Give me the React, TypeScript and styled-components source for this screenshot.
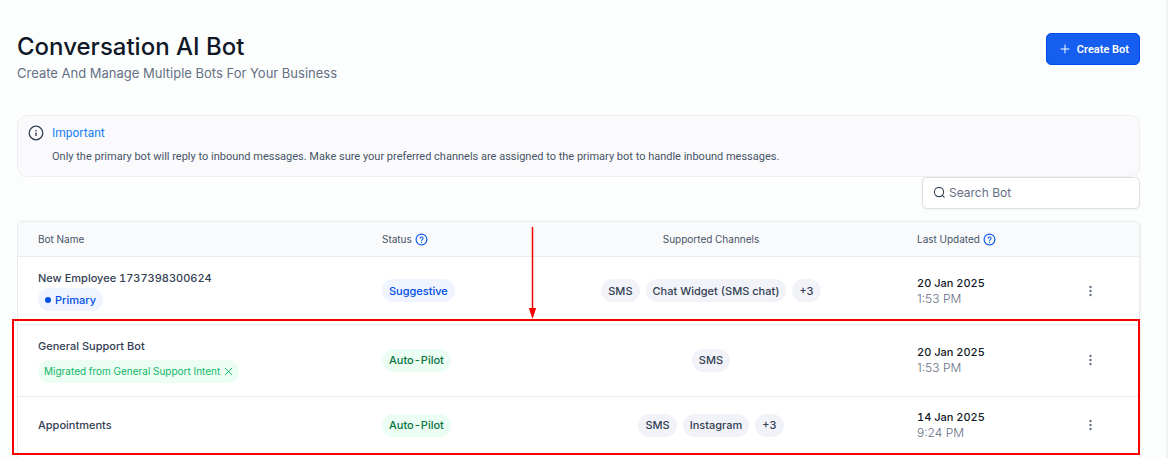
import React from "react";
import styled, { createGlobalStyle, css } from "styled-components";

const GlobalStyle = createGlobalStyle`
  *, *::before, *::after { box-sizing: border-box; }
  body {
    margin: 0;
    background: #f0f1f2;
    font-family: Inter, "Liberation Sans", sans-serif;
    color: #344054;
  }
  button, input { font: inherit; color: inherit; }
`;

const Page = styled.main`
  display: flex;
  flex-direction: column;
  min-height: 100vh;
  margin-right: 2px;
  padding: 31px 26px 0 17px;
  background: #fcfefd;
`;

const Header = styled.header`
  display: flex;
  justify-content: space-between;
  align-items: flex-start;
  height: 84px;
`;

const Title = styled.h1`
  margin: 0;
  font-size: 24px;
  line-height: 32px;
  font-weight: 500;
  color: #101828;
`;

const Subtitle = styled.p`
  margin: 0;
  font-size: 13px;
  line-height: 20px;
  color: #667085;
`;

const CreateButton = styled.button`
  display: flex;
  align-items: center;
  gap: 7px;
  height: 32px;
  margin-top: 2px;
  padding: 0 10px 0 13px;
  border: 1px solid #004eeb;
  border-radius: 5px;
  background: #155eef;
  color: #fff;
  font-family: Roboto, sans-serif;
  font-size: 11px;
  font-weight: 600;
`;

const Notice = styled.section`
  display: flex;
  gap: 8px;
  height: 62px;
  padding: 9px 10px;
  border: 1px solid #efeff3;
  border-radius: 10px;
  background: #fafafc;
`;

const NoticeTitle = styled.h2`
  margin: 0;
  font-family: Roboto, sans-serif;
  font-size: 12px;
  line-height: 17px;
  font-weight: 400;
  color: #2080f0;
`;

const NoticeText = styled.p`
  margin: 6px 0 0;
  font-family: Roboto, sans-serif;
  font-size: 11px;
  line-height: 17px;
  color: #475467;
`;

const Search = styled.label`
  display: flex;
  align-items: center;
  align-self: flex-end;
  gap: 3px;
  width: 218px;
  height: 32px;
  margin-bottom: 12px;
  padding: 0 10px 1px;
  border: 1px solid #dcdfe4;
  border-radius: 5px;
  background: #fff;
  box-shadow: 0 1px 2px rgba(16, 24, 40, 0.05);
`;

const SearchInput = styled.input`
  flex: 1;
  min-width: 0;
  padding: 0;
  border: 0;
  outline: 0;
  background: transparent;
  font-size: 12px;
  line-height: 16px;
  &::placeholder { color: #667085; opacity: 1; }
`;

const TableArea = styled.div`
  position: relative;
  display: flex;
  flex: 1;
`;

const Panel = styled.div`
  flex: 1;
  border: 1px solid #eaecf0;
  border-bottom: 0;
  border-radius: 6px 6px 0 0;
  background: #fff;
  box-shadow: 1px 0 2px rgba(16, 24, 40, 0.06);
  overflow: hidden;
`;

const Table = styled.table`
  width: 100%;
  table-layout: fixed;
  border-collapse: separate;
  border-spacing: 0;
  font-variant-numeric: tabular-nums;
`;

const Col = styled.col<{ $width?: number }>`
  ${(p) => p.$width && css`width: ${p.$width}px;`}
`;

const HeadCell = styled.th<{ $center?: boolean }>`
  height: 35px;
  padding: 0 20px;
  border-bottom: 1px solid #eaecf0;
  background: #f9fafb;
  font-size: 10px;
  line-height: 14px;
  font-weight: 400;
  color: #475467;
  text-align: ${(p) => (p.$center ? "center" : "left")};
`;

const HeadLabel = styled.span`
  display: flex;
  align-items: center;
  gap: 3px;
`;

const Row = styled.tr<{ $height: number }>`
  height: ${(p) => p.$height}px;
`;

const Cell = styled.td`
  padding: 0 20px 1px;
  border-bottom: 1px solid #eaecf0;
  font-size: 12px;
  line-height: 16px;
  vertical-align: middle;

  ${Row}:first-child > & { padding-bottom: 0; }
  ${Row}:last-child > & { border-bottom: 0; }
`;

const Stack = styled.div<{ $gap: number }>`
  display: flex;
  flex-direction: column;
  align-items: flex-start;
  gap: ${(p) => p.$gap}px;
`;

const BotName = styled.span`
  font-size: 11px;
  line-height: 16px;
  font-weight: 500;
`;

const tones = {
  blue: css`background: #eff4ff; color: #004eeb;`,
  green: css`background: #ecfdf3; color: #087443;`,
  mint: css`background: #ecfdf3; color: #12b76a;`,
  gray: css`background: #f2f3f8; color: #344054;`,
};

const Pill = styled.span<{ $tone: keyof typeof tones; $small?: boolean }>`
  display: flex;
  align-items: center;
  gap: 4px;
  width: fit-content;
  height: 23px;
  padding: 0 ${(p) => (p.$small ? 6 : 7)}px;
  border-radius: 12px;
  font-size: ${(p) => (p.$small ? 10 : 11)}px;
  font-weight: ${(p) => (p.$small ? 400 : 500)};
  white-space: nowrap;
  ${(p) => tones[p.$tone]}
`;

const Dot = styled.span`
  width: 6px;
  height: 6px;
  border-radius: 50%;
  background: #004eeb;
`;

const Channels = styled.div`
  display: flex;
  justify-content: center;
  gap: 6px;
`;

const DateText = styled.div`
  font-size: 11px;
  font-weight: 500;
  color: #101828;
`;

const TimeText = styled.div`
  font-size: 12px;
  font-weight: 300;
  font-variant-numeric: normal;
  color: #667085;
`;

const IconButton = styled.button`
  display: flex;
  justify-content: center;
  margin: 0 auto;
  padding: 0;
  border: 0;
  background: transparent;
  color: #667085;
`;

const Highlight = styled.div`
  position: absolute;
  top: 98px;
  left: -5px;
  right: 0;
  height: 136px;
  border: 2px solid #f80000;
  pointer-events: none;
`;

const Arrow = styled.svg`
  position: absolute;
  top: 6px;
  left: 511px;
  pointer-events: none;
`;

const InfoIcon = () => (
  <svg width="16" height="16" viewBox="0 0 16 16" fill="none" stroke="#344054" aria-hidden="true">
    <circle cx="8" cy="8" r="6.8" strokeWidth="1.3" />
    <path d="M8 7.4V11M8 5v1.2" strokeWidth="1.4" />
  </svg>
);

const HelpIcon = () => (
  <svg width="13" height="13" viewBox="0 0 13 13" fill="none" stroke="#155eef" strokeLinecap="round" aria-hidden="true">
    <circle cx="6.5" cy="6.5" r="5.4" strokeWidth="1.2" />
    <path d="M5 5.1a1.6 1.6 0 0 1 3.1.5c0 1-1.6 1.1-1.6 2M6.5 9.3v.1" strokeWidth="1.1" />
  </svg>
);

const SearchIcon = () => (
  <svg width="13" height="13" viewBox="0 0 13 13" fill="none" stroke="#344054" strokeLinecap="round" aria-hidden="true">
    <circle cx="6" cy="6" r="4.6" strokeWidth="1.1" />
    <path d="M9.4 9.4 11.2 11.2" strokeWidth="1.1" />
  </svg>
);

const PlusIcon = () => (
  <svg width="10" height="10" viewBox="0 0 10 10" stroke="#fff" strokeLinecap="round" aria-hidden="true">
    <path d="M5 1v8M1 5h8" />
  </svg>
);

const CloseIcon = () => (
  <svg width="9" height="9" viewBox="0 0 9 9" stroke="currentColor" strokeLinecap="round" aria-hidden="true">
    <path d="M1.2 1.2l6.6 6.6M7.8 1.2L1.2 7.8" />
  </svg>
);

const MoreIcon = () => (
  <svg width="12" height="12" viewBox="0 0 12 12" fill="currentColor" aria-hidden="true">
    <circle cx="6.5" cy="2" r="1.2" />
    <circle cx="6.5" cy="6" r="1.2" />
    <circle cx="6.5" cy="10" r="1.2" />
  </svg>
);

type Bot = {
  name: string;
  primary?: boolean;
  migrated?: string;
  status: "Suggestive" | "Auto-Pilot";
  channels: string[];
  date: string;
  time: string;
  height: number;
};

const bots: Bot[] = [
  { name: "New Employee 1737398300624", primary: true, status: "Suggestive", channels: ["SMS", "Chat Widget (SMS chat)", "+3"], date: "20 Jan 2025", time: "1:53 PM", height: 68 },
  { name: "General Support Bot", migrated: "Migrated from General Support Intent", status: "Auto-Pilot", channels: ["SMS"], date: "20 Jan 2025", time: "1:53 PM", height: 72 },
  { name: "Appointments", status: "Auto-Pilot", channels: ["SMS", "Instagram", "+3"], date: "14 Jan 2025", time: "9:24 PM", height: 57 },
];

export default function App() {
  return (
    <>
      <GlobalStyle />
      <Page>
        <Header>
          <div>
            <Title>Conversation AI Bot</Title>
            <Subtitle>Create And Manage Multiple Bots For Your Business</Subtitle>
          </div>
          <CreateButton type="button">
            <PlusIcon />
            Create Bot
          </CreateButton>
        </Header>
        <Notice>
          <InfoIcon />
          <div>
            <NoticeTitle>Important</NoticeTitle>
            <NoticeText>
              Only the primary bot will reply to inbound messages. Make sure your preferred channels are assigned to the primary bot to handle inbound messages.
            </NoticeText>
          </div>
        </Notice>
        <Search>
          <SearchIcon />
          <SearchInput type="text" placeholder="Search Bot" aria-label="Search Bot" />
        </Search>
        <TableArea>
          <Panel>
            <Table>
              <colgroup>
                <Col />
                <Col $width={163} />
                <Col $width={372} />
                <Col $width={144} />
                <Col $width={98} />
              </colgroup>
              <thead>
                <tr>
                  <HeadCell>Bot Name</HeadCell>
                  <HeadCell><HeadLabel>Status <HelpIcon /></HeadLabel></HeadCell>
                  <HeadCell $center>Supported Channels</HeadCell>
                  <HeadCell><HeadLabel>Last Updated <HelpIcon /></HeadLabel></HeadCell>
                  <HeadCell aria-label="Actions" />
                </tr>
              </thead>
              <tbody>
                {bots.map((bot) => (
                  <Row key={bot.name} $height={bot.height}>
                    <Cell>
                      <Stack $gap={bot.migrated ? 6 : 2}>
                        <BotName>{bot.name}</BotName>
                        {bot.primary && <Pill $tone="blue"><Dot />Primary</Pill>}
                        {bot.migrated && (
                          <Pill $tone="mint" $small>
                            {bot.migrated}
                            <CloseIcon />
                          </Pill>
                        )}
                      </Stack>
                    </Cell>
                    <Cell>
                      <Pill $tone={bot.status === "Suggestive" ? "blue" : "green"}>{bot.status}</Pill>
                    </Cell>
                    <Cell>
                      <Channels>
                        {bot.channels.map((c) => <Pill key={c} $tone="gray">{c}</Pill>)}
                      </Channels>
                    </Cell>
                    <Cell>
                      <DateText>{bot.date}</DateText>
                      <TimeText>{bot.time}</TimeText>
                    </Cell>
                    <Cell>
                      <IconButton type="button" aria-label={`Actions for ${bot.name}`}><MoreIcon /></IconButton>
                    </Cell>
                  </Row>
                ))}
              </tbody>
            </Table>
          </Panel>
          <Highlight />
          <Arrow width="9" height="93" viewBox="0 0 9 93" aria-hidden="true">
            <path d="M4.5 0v84" stroke="#f80000" strokeWidth="1.5" />
            <path d="M0.8 81h7.4L4.5 92z" fill="#f80000" />
          </Arrow>
        </TableArea>
      </Page>
    </>
  );
}
